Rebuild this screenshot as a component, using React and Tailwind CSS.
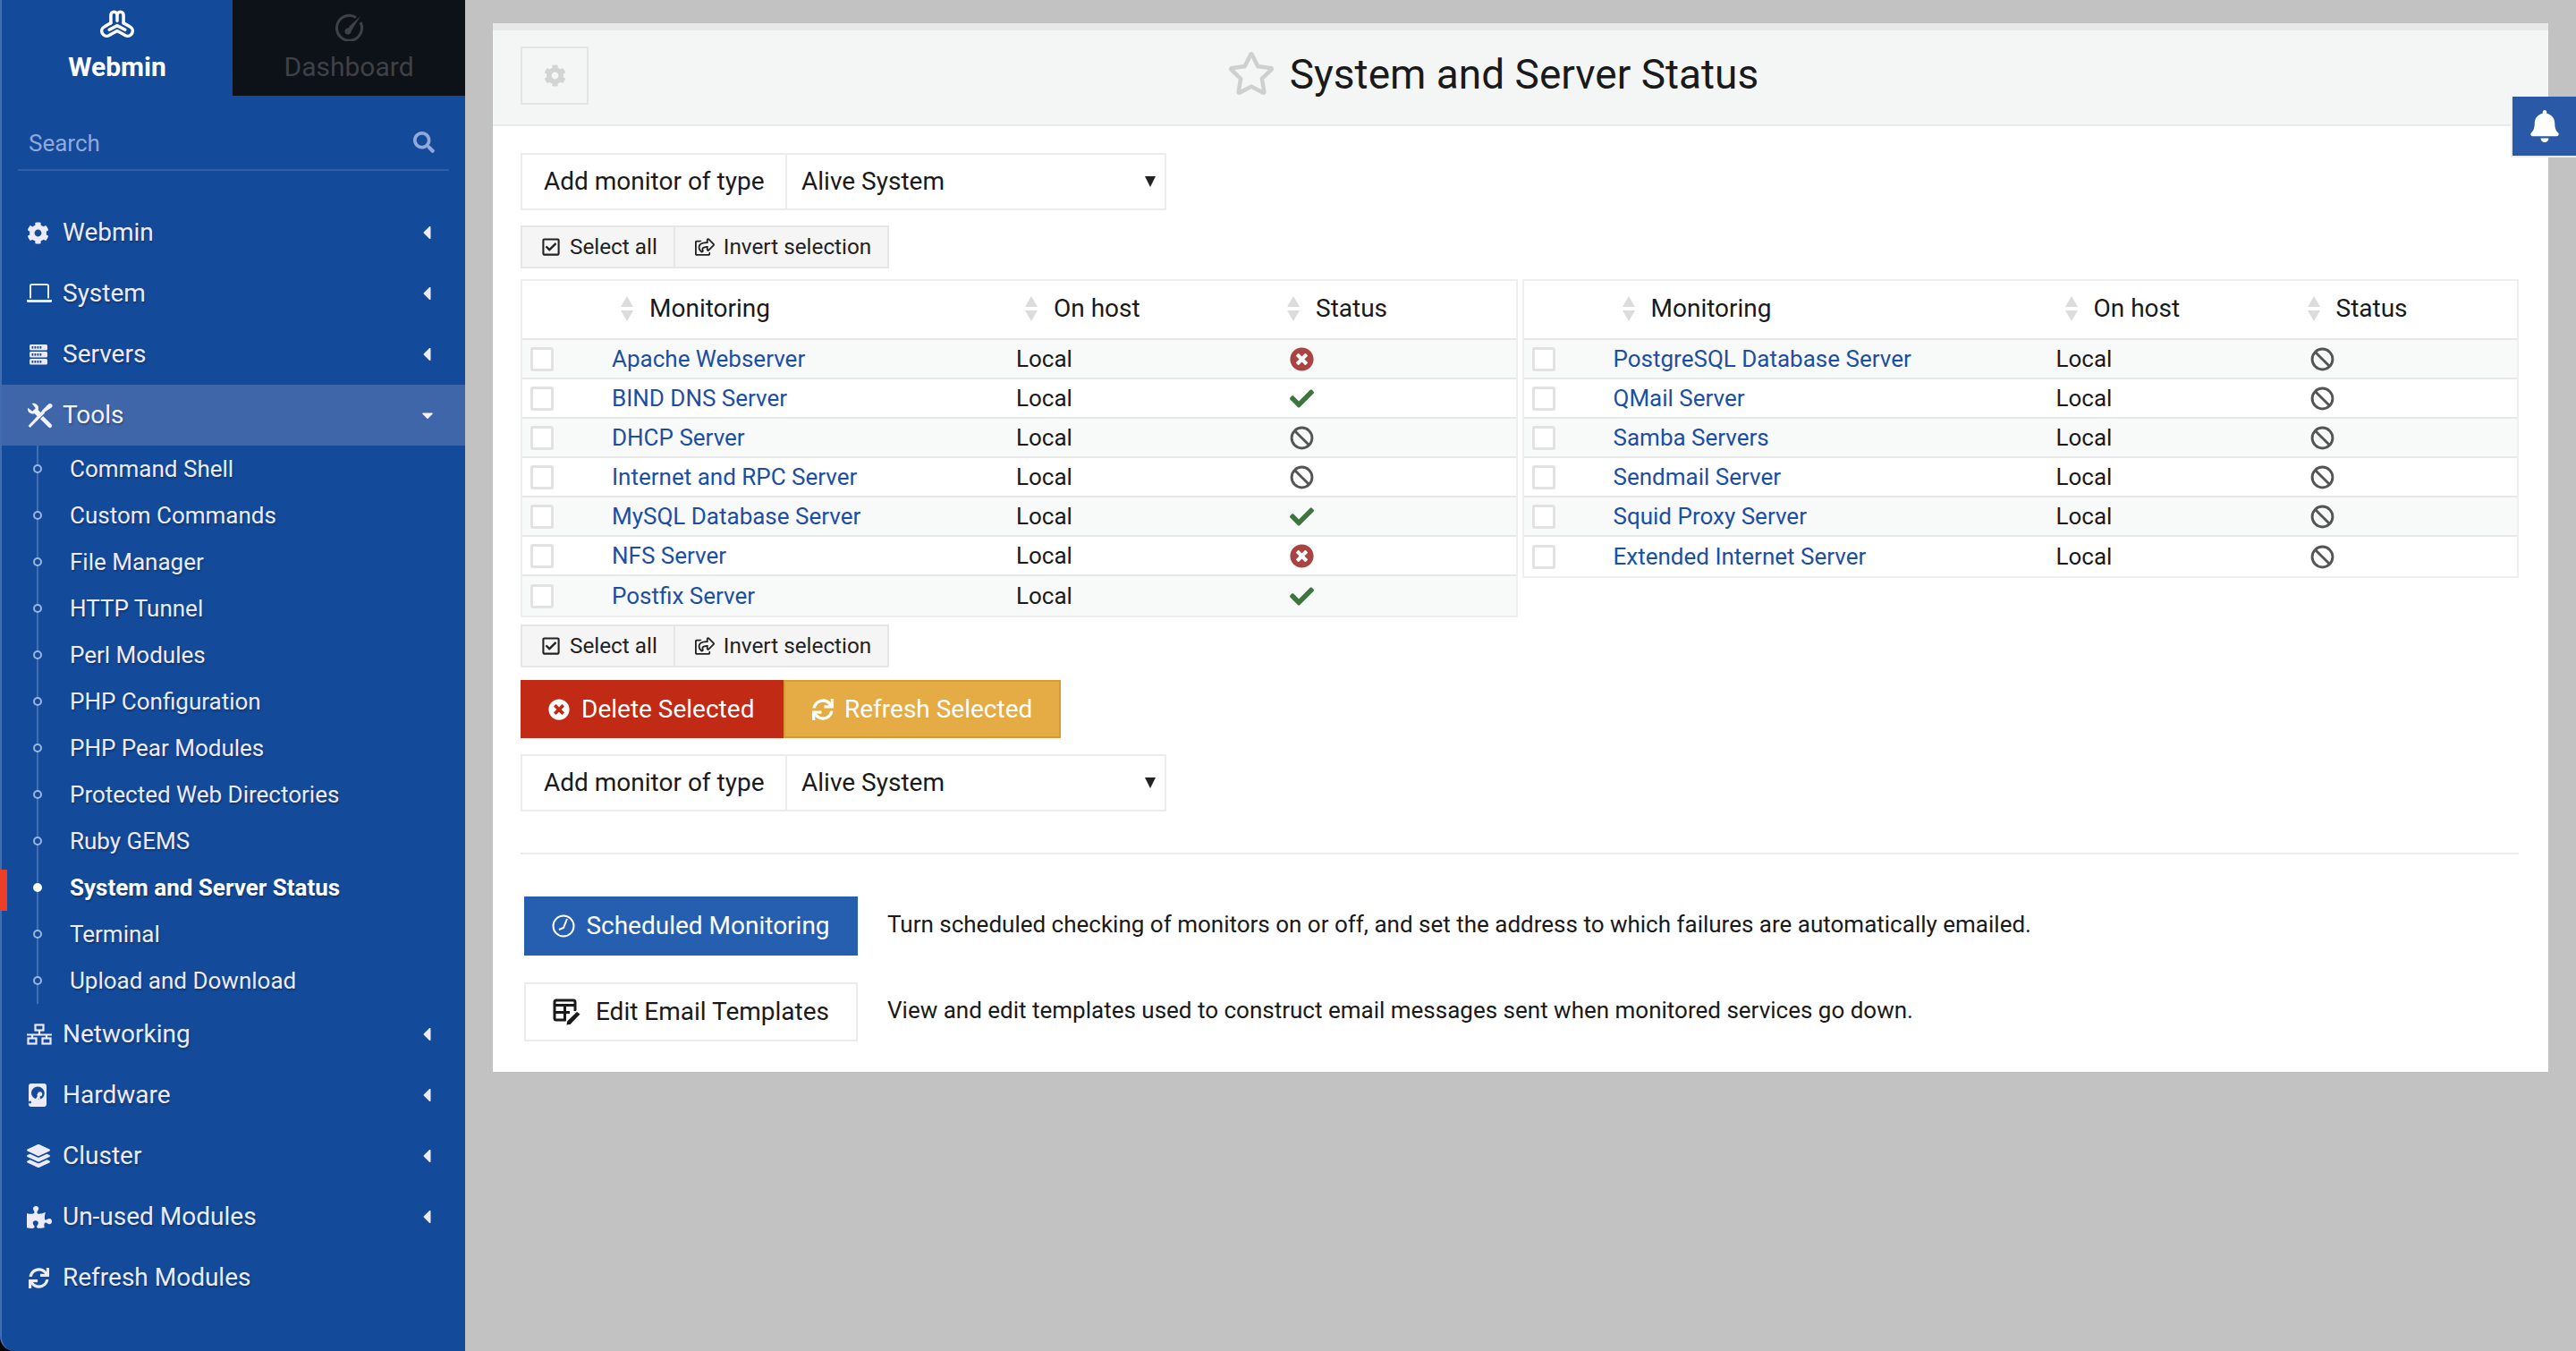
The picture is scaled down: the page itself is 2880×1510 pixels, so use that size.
import React from 'react';
import {
  FaCog, FaLayerGroup, FaPuzzlePiece, FaSync, FaSearch, FaCaretLeft, FaCaretDown,
  FaRegStar, FaRegCheckSquare, FaRegShareSquare, FaTimesCircle, FaCheck, FaBell,
} from 'react-icons/fa';

// small drawn icons that the packages don't have in the right shape
const WebminLogo = ({ className }) => (
  <svg viewBox="0 0 34 32" className={className} fill="none" stroke="currentColor" strokeWidth="3" strokeLinejoin="round" strokeLinecap="round">
    <path d="M11 14V6.500a3 3 0 0 1 6 0V12M17 6.500a3 3 0 0 1 6 0V14" />
    <path d="M11 14l-6 3.500a4.500 4.500 0 0 0 4 8.500l8-4.500 8 4.500a4.500 4.500 0 0 0 4-8.500L23 14" />
    <path d="M9.500 20.500L17 16.500l7.500 4" />
  </svg>
);

const GaugeIcon = ({ className }) => (
  <svg viewBox="0 0 32 32" className={className} fill="none" stroke="currentColor">
    <path d="M24 5.500A14 14 0 1 0 29 11" strokeWidth="3" />
    <path d="M29 4 17 15l-3 5 4 2 3-5z" fill="currentColor" stroke="none" />
    <circle cx="15" cy="21" r="3.500" fill="currentColor" stroke="none" />
  </svg>
);

const LaptopIcon = ({ className }) => (
  <svg viewBox="0 0 30 24" className={className} fill="none" stroke="currentColor">
    <path d="M5 17.500V3.500A1.500 1.500 0 0 1 6.500 2h17A1.500 1.500 0 0 1 25 3.500v14" strokeWidth="2" />
    <path d="M1 19h28v1.500a1.500 1.500 0 0 1-1.500 1.500h-25A1.500 1.500 0 0 1 1 20.500z" fill="currentColor" stroke="none" />
  </svg>
);

const ServersIcon = ({ className }) => (
  <svg viewBox="0 0 20 24" className={className}>
    {[1, 9, 17].map((y) => (
      <g key={y}>
        <rect x="0" y={y} width="20" height="6.500" rx="1.500" fill="currentColor" />
        {[2.500, 5.500, 8.500, 11.500].map((x) => (
          <rect key={x} x={x} y={y + 2} width="1.800" height="2.600" fill="#134a9a" />
        ))}
      </g>
    ))}
  </svg>
);

const ToolsIcon = ({ className }) => (
  <svg viewBox="0 0 28 28" className={className} fill="currentColor">
    <path d="M1.500 25 17 8.500l2.500 2.500L3.500 27z" />
    <path d="M18 11l-2-2 7.500-7.500a2.500 2.500 0 0 1 3.500 3.500z" />
    <path d="M1 5.500 6 9.500 9.500 6 5.500 1C9 0 13 2.500 12.500 6.500c0 .6-.1 1-.3 1.400L16.500 12 12.500 16l-4.300-4.200C4.500 13 0 10 1 5.500z" />
    <path d="M14.500 17.500l3-3 9 9a2.100 2.100 0 0 1-3 3z" />
  </svg>
);

const LanIcon = ({ className }) => (
  <svg viewBox="0 0 28 24" className={className} fill="none" stroke="currentColor" strokeWidth="2.200">
    <rect x="9.500" y="1.500" width="9" height="6" />
    <rect x="1.500" y="16.500" width="9" height="6" />
    <rect x="17.500" y="16.500" width="9" height="6" />
    <path d="M14 7.500v5M0 12.500h28M6 12.500v4M22 12.500v4" />
  </svg>
);

const DiskIcon = ({ className }) => (
  <svg viewBox="0 0 20 26" className={className}>
    <path
      fill="currentColor"
      fillRule="evenodd"
      d="M3 0h14a3 3 0 0 1 3 3v20a3 3 0 0 1-3 3H3a3 3 0 0 1-3-3V3a3 3 0 0 1 3-3zm7 3.500a7 7 0 0 0-2 13.700l2.500-4.200a2.500 2.500 0 1 1 2.500 1.300l-2.300 3.900a7 7 0 0 0-.700-14.700zM3 21a1.500 1.500 0 1 0 0 .1z"
    />
    <path d="M10 12l4 9" stroke="currentColor" strokeWidth="1.800" />
  </svg>
);

const ClockIcon = ({ className }) => (
  <svg viewBox="0 0 26 26" className={className} fill="none" stroke="currentColor" strokeWidth="2">
    <circle cx="13" cy="13" r="11.500" />
    <path d="M17 5l-4 10-5 2" />
  </svg>
);

const TemplateIcon = ({ className }) => (
  <svg viewBox="0 0 32 30" className={className} fill="none">
    <path d="M25 14V4a2 2 0 0 0-2-2H4a2 2 0 0 0-2 2v18a2 2 0 0 0 2 2h11" stroke="currentColor" strokeWidth="3" />
    <path d="M2 7.500h23M2 15.500h17M13.500 7.500V24" stroke="currentColor" strokeWidth="3" />
    <path d="M27 14l4.500 3.500L20 29.500l-5.500 1 1-5.500z" fill="currentColor" stroke="white" strokeWidth="1.500" />
  </svg>
);

const BanIcon = ({ className }) => (
  <svg viewBox="0 0 26 26" className={className} fill="none" stroke="currentColor" strokeWidth="2.800">
    <circle cx="13" cy="13" r="11" />
    <path d="M5.500 5.500l15 15" />
  </svg>
);

const SortArrows = () => (
  <svg viewBox="0 0 14 28" className="h-[28px] w-[14px] shrink-0 text-[#dcdcdc]" fill="currentColor">
    <path d="M7 0l7 12H0zM7 28L0 16h14z" />
  </svg>
);

const menuTop = [
  { label: 'Webmin', icon: <FaCog className="h-[25px] w-[25px]" /> },
  { label: 'System', icon: <LaptopIcon className="h-[24px] w-[30px] -ml-[1px]" /> },
  { label: 'Servers', icon: <ServersIcon className="h-[24px] w-[20px] ml-[3px]" /> },
];

const toolItems = [
  'Command Shell', 'Custom Commands', 'File Manager', 'HTTP Tunnel', 'Perl Modules', 'PHP Configuration',
  'PHP Pear Modules', 'Protected Web Directories', 'Ruby GEMS', 'System and Server Status', 'Terminal', 'Upload and Download',
];

const menuBottom = [
  { label: 'Networking', icon: <LanIcon className="h-[24px] w-[28px]" /> },
  { label: 'Hardware', icon: <DiskIcon className="h-[26px] w-[20px] ml-[2px]" /> },
  { label: 'Cluster', icon: <FaLayerGroup className="h-[26px] w-[26px]" /> },
  { label: 'Un-used Modules', icon: <FaPuzzlePiece className="h-[27px] w-[28px]" /> },
  { label: 'Refresh Modules', icon: <FaSync className="h-[23px] w-[23px] ml-[2px]" />, noCaret: true },
];

const leftRows = [
  ['Apache Webserver', 'down'], ['BIND DNS Server', 'up'], ['DHCP Server', 'off'], ['Internet and RPC Server', 'off'],
  ['MySQL Database Server', 'up'], ['NFS Server', 'down'], ['Postfix Server', 'up'],
];

const rightRows = [
  ['PostgreSQL Database Server', 'off'], ['QMail Server', 'off'], ['Samba Servers', 'off'], ['Sendmail Server', 'off'],
  ['Squid Proxy Server', 'off'], ['Extended Internet Server', 'off'],
];

const StatusIcon = ({ status }) => {
  if (status === 'down') return <FaTimesCircle className="h-[27px] w-[27px] text-[#a94442]" />;
  if (status === 'up') return <FaCheck className="h-[27px] w-[27px] text-[#3c763d]" />;
  return <BanIcon className="h-[27px] w-[27px] text-[#555555]" />;
};

const SideRow = ({ item }) => (
  <div className="flex h-[68px] items-center pl-[28px] pr-[35px] text-[28px] text-[#ecebfc] [text-shadow:1px_2px_2px_rgba(0,0,0,0.25)]">
    <span className="flex w-[40px] shrink-0 items-center">{item.icon}</span>
    <span className="flex-1">{item.label}</span>
    {!item.noCaret && <FaCaretLeft className="h-[24px] w-[16px]" />}
  </div>
);

const MonitorTable = ({ rows, cols }) => (
  <div className="flex-1 border-2 border-[#efefef]">
    <div className={`grid h-[66px] items-center border-b-2 border-[#e8e8e8] pb-[3px] text-[28px] text-[#1a1a1a] ${cols}`}>
      <span />
      {['Monitoring', 'On host', 'Status'].map((h) => (
        <span key={h} className="flex items-center gap-[18px] pl-[10px]">
          <SortArrows />
          {h}
        </span>
      ))}
    </div>
    {rows.map(([name, status], i) => (
      <div
        key={name}
        className={`grid h-[44px] items-center border-b-2 border-[#e8e8e8] text-[26px] last:border-b-0 ${cols} ${i % 2 === 0 ? 'bg-[#f8f9f9]' : 'bg-white'}`}
      >
        <span className="pl-[9px]">
          <span className="block h-[27px] w-[26px] rounded-[3px] border-[3px] border-[#e2e2e2] bg-white" />
        </span>
        <a className="text-[#1c4fa3]">{name}</a>
        <span className="text-[#1a1a1a]">Local</span>
        <span className="pl-[13px]">
          <StatusIcon status={status} />
        </span>
      </div>
    ))}
  </div>
);

const SelectButtons = () => (
  <div className="flex h-[48px] w-fit border-2 border-[#e6e6e6] bg-[#f5f5f5] text-[24.3px] text-[#222222]">
    <span className="flex items-center gap-[10px] pl-[21px] pr-[18px]">
      <FaRegCheckSquare className="h-[22px] w-[22px]" /> Select all
    </span>
    <span className="flex items-center gap-[10px] border-l-2 border-[#e6e6e6] pl-[22px] pr-[18px]">
      <FaRegShareSquare className="h-[22px] w-[22px]" /> Invert selection
    </span>
  </div>
);

const AddMonitor = () => (
  <div className="flex h-[64px] w-[722px] text-[28px] text-[#1a1a1a]">
    <span className="flex w-[296px] items-center border-2 border-r-0 border-[#ececec] pl-[24px]">Add monitor of type</span>
    <span className="flex flex-1 items-center justify-between border-2 border-[#ececec] pl-[16px] pr-[10px]">
      Alive System
      <span className="h-0 w-0 border-x-[6px] border-t-[12px] border-x-transparent border-t-[#222222]" />
    </span>
  </div>
);

export default function App() {
  return (
    <div className="flex h-[1510px] w-[2880px] overflow-hidden bg-black font-['Roboto',sans-serif]">
      <aside className="relative h-full w-[520px] shrink-0 rounded-bl-[16px] border-l-2 border-[#3f6db0] bg-[#134a9a]">
        <div className="flex h-[107px]">
          <div className="flex w-[258px] flex-col items-center pt-[9px] text-white">
            <WebminLogo className="h-[38px] w-[40px]" />
            <span className="mt-[11px] text-[30px] font-bold leading-[34px]">Webmin</span>
          </div>
          <div className="flex w-[260px] flex-col items-center bg-[#0d1118] pt-[14px] text-[#3e4146]">
            <GaugeIcon className="h-[32px] w-[32px]" />
            <span className="mt-[12px] text-[30px] leading-[34px]">Dashboard</span>
          </div>
        </div>
        <div className="mx-[18px] mt-[33px] flex h-[51px] items-start justify-between border-b-2 border-[#2f5fa9] pl-[12px] pr-[16px] text-[26px] leading-[40px] text-[#8fa9da]">
          Search
          <FaSearch className="mt-[7px] h-[24px] w-[24px]" />
        </div>
        <nav className="mt-[35px]">
          {menuTop.map((item) => <SideRow key={item.label} item={item} />)}
          <div className="flex h-[68px] items-center bg-[#3e66a9] pl-[28px] pr-[32px] text-[28px] text-[#f3f3ff] [text-shadow:1px_2px_2px_rgba(0,0,0,0.25)]">
            <ToolsIcon className="mr-[11px] h-[29px] w-[29px] shrink-0" />
            <span className="flex-1">Tools</span>
            <FaCaretDown className="h-[20px] w-[20px]" />
          </div>
          <div className="relative">
            <span className="absolute bottom-[0px] left-[39px] top-0 w-[2px] bg-[#416fb3]" />
            {toolItems.map((name) => {
              const active = name === 'System and Server Status';
              return (
                <div key={name} className={`relative flex h-[52px] items-center pl-[76px] text-[26px] [text-shadow:1px_2px_2px_rgba(0,0,0,0.25)] ${active ? 'font-bold text-white' : 'text-[#ecebfc]'}`}>
                  {active && <span className="absolute -left-[2px] top-[6px] h-[46px] w-[8px] bg-[#ef3e26]" />}
                  <span className={`absolute left-[35px] top-[21px] h-[10px] w-[10px] rounded-full border-2 ${active ? 'border-white bg-white' : 'border-[#9db6e0] bg-[#134a9a]'}`} />
                  {name}
                </div>
              );
            })}
          </div>
          {menuBottom.map((item) => <SideRow key={item.label} item={item} />)}
        </nav>
      </aside>

      <main className="relative flex-1 bg-[#c1c2c1] pl-[31px] pr-[31px] pt-[26px]">
        <div className="h-[1172px] border-t-[8px] border-[#e8e8e8] bg-white">
          <header className="relative flex h-[107px] items-center justify-center border-b-2 border-[#ebebeb] bg-[#f4f6f5] pb-[6px] pr-[62px]">
            <span className="absolute left-[31px] top-[18px] flex h-[65px] w-[76px] items-center justify-center border-2 border-[#e4e4e4] text-[#d3d3d3]">
              <FaCog className="h-[25px] w-[25px]" />
            </span>
            <FaRegStar className="mb-[4px] mr-[16px] h-[52px] w-[54px] text-[#cfcfcf]" />
            <h1 className="text-[46px] font-normal text-[#1a1a1a]">System and Server Status</h1>
          </header>

          <div className="pl-[31px] pr-[33px] pt-[30px]">
            <AddMonitor />
            <div className="mt-[17px]"><SelectButtons /></div>
            <div className="mt-[12px] flex items-start gap-[5px]">
              <MonitorTable rows={leftRows} cols="grid-cols-[100px_452px_293px_1fr]" />
              <MonitorTable rows={rightRows} cols="grid-cols-[100px_495px_271px_1fr]" />
            </div>
            <div className="mt-[8px]"><SelectButtons /></div>
            <div className="mt-[14px] flex h-[65px] w-fit text-[28px] text-white">
              <span className="flex w-[294px] items-center gap-[13px] border-2 border-[#c12a14] bg-[#c12a14] pl-[29px]">
                <FaTimesCircle className="h-[24px] w-[24px]" /> Delete Selected
              </span>
              <span className="flex w-[310px] items-center gap-[12px] border-2 border-[#da9a30] bg-[#e5ab44] pl-[30px]">
                <FaSync className="h-[24px] w-[24px]" /> Refresh Selected
              </span>
            </div>
            <div className="mt-[18px]"><AddMonitor /></div>
            <hr className="mt-[46px] border-t-2 border-[#ececec]" />
            <div className="mt-[47px] flex items-center pl-[4px]">
              <span className="flex h-[66px] w-[373px] items-center justify-center gap-[12px] bg-[#265fb0] text-[28px] text-white">
                <ClockIcon className="h-[26px] w-[26px]" /> Scheduled Monitoring
              </span>
              <span className="ml-[33px] pb-[3px] text-[26px] text-[#1a1a1a]">Turn scheduled checking of monitors on or off, and set the address to which failures are automatically emailed.</span>
            </div>
            <div className="mt-[30px] flex items-center pl-[4px]">
              <span className="flex h-[66px] w-[373px] items-center justify-center gap-[16px] border-2 border-[#ececec] text-[28px] text-[#1a1a1a]">
                <TemplateIcon className="h-[30px] w-[32px]" /> Edit Email Templates
              </span>
              <span className="ml-[33px] pb-[3px] text-[26px] text-[#1a1a1a]">View and edit templates used to construct email messages sent when monitored services go down.</span>
            </div>
          </div>
        </div>
        <span className="absolute right-0 top-[108px] flex h-[68px] w-[73px] items-center justify-center border-b-2 border-l-2 border-[#e8ecf5] bg-[#2a5aa7] text-white">
          <FaBell className="h-[36px] w-[34px]" />
        </span>
      </main>
    </div>
  );
}
